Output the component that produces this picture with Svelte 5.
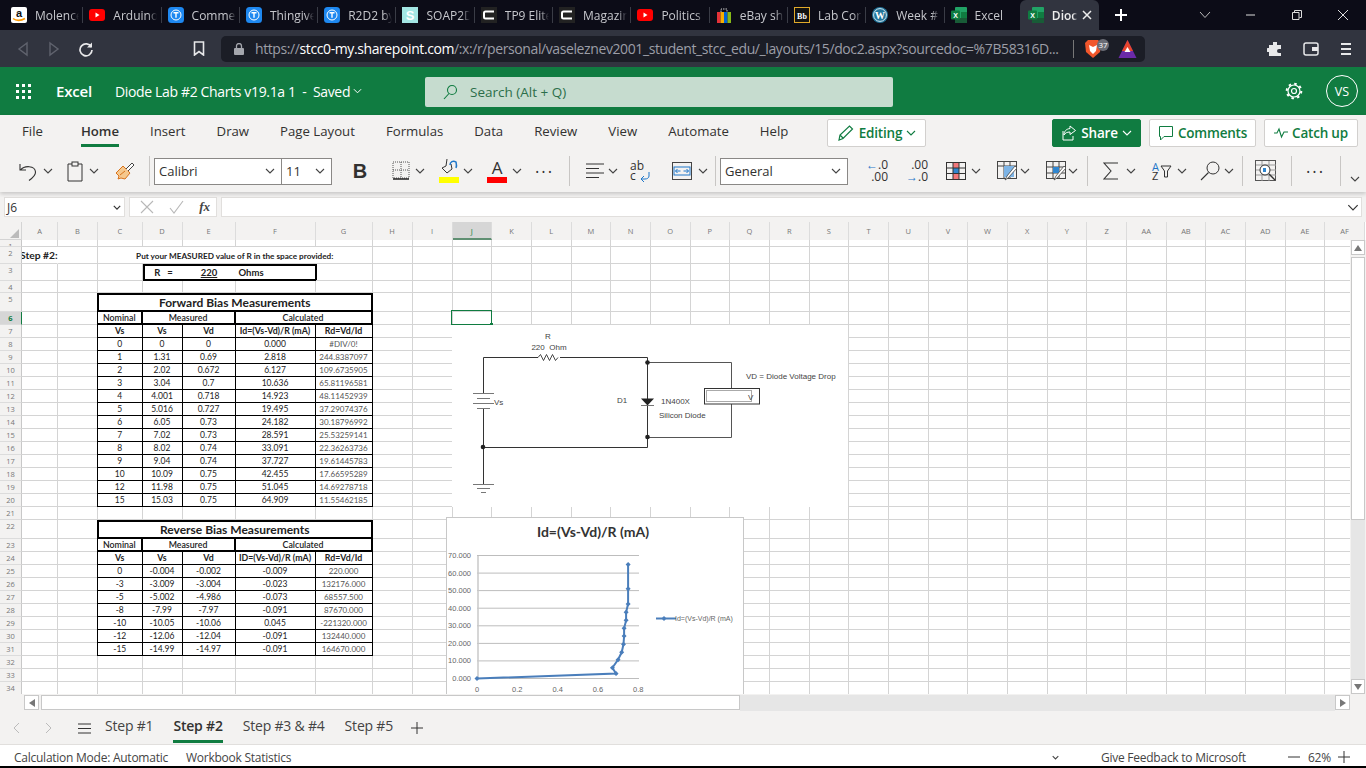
<script>
  const tabs = [
    ['Molence','amazon'],['Arduino','yt'],['Comme','t'],['Thingive','t'],['R2D2 by','t'],['SOAP2D','s'],['TP9 Elite','c'],['Magazin','c'],['Politics','yt'],['eBay sh','ebay'],['Lab Cor','bb'],['Week #','wp'],['Excel','xl']
  ];
  const ribbon = ['File','Home','Insert','Draw','Page Layout','Formulas','Data','Review','View','Automate','Help'];
  const colW = [36,40,44.5,40,53,80,57,40,40];
  for (let i = 0; i < 23; i++) colW.push(39.68);
  const names = 'A B C D E F G H I J K L M N O P Q R S T U V W X Y Z AA AB AC AD AE AF'.split(' ');
  const rowH = [7,17,17,12,19,13];
  for (let i = 0; i < 14; i++) rowH.push(13);
  rowH.push(13,19,13);
  for (let i = 0; i < 11; i++) rowH.push(13);
  const gridCols = '22px ' + colW.map(w => w + 'px').join(' ');
  const gridRows = '18px ' + rowH.map(h => h + 'px').join(' ');

  const fwd = [
    ['0','0','0','0.000','#DIV/0!'],['1','1.31','0.69','2.818','244.8387097'],['2','2.02','0.672','6.127','109.6735905'],
    ['3','3.04','0.7','10.636','65.81196581'],['4','4.001','0.718','14.923','48.11452939'],['5','5.016','0.727','19.495','37.29074376'],
    ['6','6.05','0.73','24.182','30.18796992'],['7','7.02','0.73','28.591','25.53259141'],['8','8.02','0.74','33.091','22.36263736'],
    ['9','9.04','0.74','37.727','19.61445783'],['10','10.09','0.75','42.455','17.66595289'],['12','11.98','0.75','51.045','14.69278718'],['15','15.03','0.75','64.909','11.55462185']
  ];
  const rev = [
    ['0','-0.004','-0.002','-0.009','220.000'],['-3','-3.009','-3.004','-0.023','132176.000'],['-5','-5.002','-4.986','-0.073','68557.500'],
    ['-8','-7.99','-7.97','-0.091','87670.000'],['-10','-10.05','-10.06','0.045','-221320.000'],['-12','-12.06','-12.04','-0.091','132440.000'],['-15','-14.99','-14.97','-0.091','164670.000']
  ];
  const data = {};
  const put = (r, c, t, cls = '', span = 1) => { data[r + '-' + c] = { t, cls, span }; for (let i = 1; i < span; i++) data[r + '-' + (c + i)] = null; };
  put(2, 0, 'Step #2:', 'stepl');
  put(2, 2, 'Put your MEASURED value of R in the space provided:', 'note', 5);
  put(3, 3, 'R   =', 'rb rl');
  put(3, 4, '220', 'rb rm');
  put(3, 5, 'Ohms', 'rb rr');
  const block = (top, title, head, rows) => {
    put(top, 2, title, 'title', 5);
    put(top + 1, 2, 'Nominal', 'sub first');
    put(top + 1, 3, 'Measured', 'sub', 2);
    put(top + 1, 5, 'Calculated', 'sub', 2);
    head.forEach((h, i) => put(top + 2, 2 + i, h, 'td hd' + (i === 0 ? ' first' : '')));
    rows.forEach((row, j) => row.forEach((v, i) => put(top + 3 + j, 2 + i, v, 'td' + (i === 0 ? ' first' : '') + (i === 4 ? ' grey' : ''))));
  };
  block(5, 'Forward Bias Measurements', ['Vs','Vs','Vd','Id=(Vs-Vd)/R (mA)','Rd=Vd/Id'], fwd);
  block(22, 'Reverse Bias Measurements', ['Vs','Vs','Vd','ID=(Vs-Vd)/R (mA)','Rd=Vd/Id'], rev);

  const cx = v => 477 + v * 201.5;
  const cy = v => 678.5 - v * 1.757;
  const pts = fwd.map(r => [cx(+r[2]), cy(+r[3])]);
  const line = pts.map(p => p[0].toFixed(1) + ',' + p[1].toFixed(1)).join(' ');
  const ticks = [0,10,20,30,40,50,60,70];
  const xt = ['0','0.2','0.4','0.6','0.8'];
</script>

{#snippet chev(w = 10)}
  <svg class="chev" width={w} height="6" viewBox="0 0 10 6"><path d="M1 1l4 4 4-4" fill="none" stroke="#444" stroke-width="1.1"/></svg>
{/snippet}

{#snippet chevG()}
  <svg width="10" height="6" viewBox="0 0 10 6"><path d="M1 1l4 4 4-4" fill="none" stroke="#107c41" stroke-width="1.1"/></svg>
{/snippet}

{#snippet fav(k)}
  <svg width="16" height="16" viewBox="0 0 16 16" class="fav">
    {#if k === 'amazon'}
      <rect width="16" height="16" rx="2" fill="#fff"/><text x="8" y="10" text-anchor="middle" class="fa">a</text><path d="M2 11.5c3 2.5 8 2.5 12 0" stroke="#f90" stroke-width="1.6" fill="none"/>
    {:else if k === 'yt'}
      <rect y="2" width="16" height="12" rx="3" fill="#f00"/><path d="M6.5 5.5v5l4-2.5z" fill="#fff"/>
    {:else if k === 't'}
      <rect width="16" height="16" rx="3.5" fill="#1e88f0"/><circle cx="8" cy="8" r="5" fill="none" stroke="#fff" stroke-width="1"/><path d="M5.5 5.8h5M8 5.8v5" stroke="#fff" stroke-width="1.4" fill="none"/>
    {:else if k === 's'}
      <rect width="16" height="16" fill="#a3e6e3"/><text x="8" y="13" text-anchor="middle" class="fs">S</text>
    {:else if k === 'c'}
      <rect width="16" height="16" fill="#222"/><path d="M13 4.5H4.5Q3 4.5 3 6v4q0 1.5 1.5 1.5H13" fill="none" stroke="#fff" stroke-width="2"/>
    {:else if k === 'ebay'}
      <rect x="1" y="5" width="3.5" height="11" fill="#e53238"/><rect x="4.5" y="5" width="3.5" height="11" fill="#f5af02"/><rect x="8" y="5" width="3.5" height="11" fill="#0064d2"/><rect x="11.5" y="5" width="3.5" height="11" fill="#86b817"/><path d="M5 5V2h6v3" stroke="#ccc" fill="none" stroke-dasharray="1.5 1"/>
    {:else if k === 'bb'}
      <rect x=".5" y=".5" width="15" height="15" fill="#111" stroke="#e0a92a"/><text x="8" y="11.5" text-anchor="middle" class="fb">Bb</text>
    {:else if k === 'wp'}
      <circle cx="8" cy="8" r="8" fill="#21759b"/><circle cx="8" cy="8" r="6.4" fill="none" stroke="#fff" stroke-width=".8"/><text x="8" y="12" text-anchor="middle" class="fw">W</text>
    {:else if k === 'xl'}
      <rect x="4" width="12" height="16" rx="1" fill="#21a366"/><rect x="10" y="5" width="6" height="6" fill="#107c41"/><rect x="4" y="11" width="12" height="5" fill="#185c37"/><rect y="3.5" width="9" height="9" rx="1" fill="#107c41"/><text x="4.5" y="11" text-anchor="middle" class="fx">X</text>
    {/if}
  </svg>
{/snippet}

<div class="app">
  <div class="tabbar">
    {#each tabs as [t, k]}
      <div class="tab">{@render fav(k)}<span class="tt">{t}</span></div>
    {/each}
    <div class="tab active">{@render fav('xl')}<span class="tt">Dioc</span>
      <svg class="tabx" width="10" height="10" viewBox="0 0 10 10"><path d="M1 1l8 8M9 1L1 9" stroke="#eee" stroke-width="1.5"/></svg>
    </div>
    <svg class="plus" width="14" height="14" viewBox="0 0 14 14"><path d="M7 1v12M1 7h12" stroke="#fff" stroke-width="2"/></svg>
    <div class="winbtns">
      <svg width="12" height="8" viewBox="0 0 12 8"><path d="M1 1l5 5.5L11 1" stroke="#bbb" fill="none"/></svg>
      <svg width="12" height="12" viewBox="0 0 12 12"><path d="M1 6h9" stroke="#ddd"/></svg>
      <svg width="12" height="12" viewBox="0 0 12 12"><path d="M1.5 3.5h6.5v7h-6.5zM3.5 3V1.5h7v7H8.5" stroke="#ddd" fill="none"/></svg>
      <svg width="12" height="12" viewBox="0 0 12 12"><path d="M1 1l10 10M11 1L1 11" stroke="#ddd"/></svg>
    </div>
  </div>

  <div class="navbar">
    <svg class="nv1" width="12" height="16" viewBox="0 0 12 16"><path d="M10 2L2 8l8 6z" fill="none" stroke="#60636e" stroke-width="1.4"/></svg>
    <svg class="nv2" width="12" height="16" viewBox="0 0 12 16"><path d="M2 2l8 6-8 6z" fill="none" stroke="#60636e" stroke-width="1.4"/></svg>
    <svg class="nv3" width="16" height="16" viewBox="0 0 16 16"><path d="M13.3 6A6 6 0 1 0 14 9" fill="none" stroke="#e8e8ea" stroke-width="1.7"/><path d="M14 1.5V6.6H9z" fill="#e8e8ea"/></svg>
    <svg class="nv4" width="12" height="15" viewBox="0 0 12 15"><path d="M1.5 1h9v13L6 10.5 1.5 14z" fill="none" stroke="#e8e8ea" stroke-width="1.6"/></svg>
    <div class="urlbox">
      <svg width="10" height="12" viewBox="0 0 10 12"><rect y="5" width="10" height="7" rx="1" fill="#a4a6ad"/><path d="M2.5 5V3a2.5 2.5 0 0 1 5 0v2" fill="none" stroke="#a4a6ad" stroke-width="1.3"/></svg>
      <span class="url">https://<b>stcc0-my.sharepoint.com</b>/:x:/r/personal/vaseleznev2001_student_stcc_edu/_layouts/15/doc2.aspx?sourcedoc=%7B58316D...</span>
      <i class="usep"></i>
      <svg class="brave" width="18" height="20" viewBox="0 0 18 20"><path d="M4 1h10l3 3-1 9-7 6-7-6-1-9z" fill="#f1562b"/><path d="M5 6l4 2 4-2-1 6-3 3-3-3z" fill="#fff"/></svg>
      <span class="badge">37</span>
      <svg class="tri" width="19" height="20" viewBox="0 0 19 20"><path d="M9.5 1L18.5 19H.5z" fill="#6b2aa8"/><path d="M9.5 1L15 12H4z" fill="#e8452c"/><path d="M9.5 8l3 5h-6z" fill="#fff"/></svg>
    </div>
    <svg class="ex1" width="16" height="16" viewBox="0 0 16 16"><path d="M6 1h4v3h4v4h-2a2 2 0 0 0 0 4h2v3H2v-4H1a2 2 0 0 1 0-4h1V4h4z" fill="#e8e8ea"/></svg>
    <svg class="ex2" width="16" height="15" viewBox="0 0 16 15"><rect x="1" y="2" width="14" height="12" rx="2" fill="none" stroke="#e8e8ea" stroke-width="1.5"/><rect x="9" y="6" width="6" height="4" fill="#e8e8ea"/></svg>
    <svg class="ex3" width="12" height="14" viewBox="0 0 12 14"><path d="M1 2h10M1 7h10M1 12h10" stroke="#e8e8ea" stroke-width="1.8"/></svg>
  </div>

  <div class="greenbar">
    <svg class="waffle" width="16" height="16" viewBox="0 0 16 16" fill="#fff">
      {#each [1,7,13] as y}{#each [1,7,13] as x}<rect x={x-1} {y} width="3" height="3"/>{/each}{/each}
    </svg>
    <span class="brand">Excel</span>
    <span class="doc">Diode Lab #2 Charts v19.1a 1&nbsp; - &nbsp;Saved</span>
    <svg class="dchev" width="9" height="6" viewBox="0 0 10 6"><path d="M1 1l4 4 4-4" fill="none" stroke="#fff" stroke-width="1.1"/></svg>
    <div class="search">
      <svg width="16" height="16" viewBox="0 0 16 16"><circle cx="10" cy="6" r="4.5" fill="none" stroke="#107c41" stroke-width="1.1"/><path d="M7 9.5L2 15" stroke="#107c41" stroke-width="1.1"/></svg>
      <span>Search (Alt + Q)</span>
    </div>
    <svg class="gear" width="18" height="18" viewBox="0 0 18 18"><circle cx="9" cy="9" r="2.5" fill="none" stroke="#fff" stroke-width="1.2"/><circle cx="9" cy="9" r="6" fill="none" stroke="#fff" stroke-width="1.2"/><circle cx="9" cy="9" r="7.3" fill="none" stroke="#fff" stroke-width="2" stroke-dasharray="2.5 3.23"/></svg>
    <div class="avatar">VS</div>
  </div>

  <div class="ribbon">
    <div class="rtabs">
      {#each ribbon as r}
        <span class="rtab" class:on={r === 'Home'}>{r}</span>
      {/each}
      <div class="rbtn editing">
        <svg width="18" height="18" viewBox="0 0 18 18"><path d="M2 16l1-5L12.5 2l3 3L6 14.5zM3 11l3.5 3.5" fill="none" stroke="#107c41" stroke-width="1.2"/></svg>
        <b>Editing</b>{@render chevG()}
      </div>
      <div class="rbtn share">
        <svg width="16" height="16" viewBox="0 0 16 16"><path d="M9 1l5.5 4.5L9 9.5V7c-3 0-5 1-6 3 0-3.5 2-6 6-6.500zM2 6v9h10v-4" fill="none" stroke="#fff" stroke-width="1"/></svg>
        <b>Share</b>
        <svg width="10" height="6" viewBox="0 0 10 6"><path d="M1 1l4 4 4-4" fill="none" stroke="#fff" stroke-width="1.1"/></svg>
      </div>
      <div class="rbtn comments">
        <svg width="16" height="16" viewBox="0 0 16 16"><path d="M1.5 1.5h13v10H6l-3.5 3.500v-3.500h-1z" fill="none" stroke="#107c41" stroke-width="1"/></svg>
        <b>Comments</b>
      </div>
      <div class="rbtn catch">
        <svg width="14" height="12" viewBox="0 0 14 12"><path d="M0 6h3l2-4 2.5 8L10 5h4" fill="none" stroke="#107c41" stroke-width="1.1"/></svg>
        <b>Catch up</b>
      </div>
    </div>
    <div class="tools">
      <div class="t w40"><svg width="20" height="22" viewBox="0 0 20 22"><path d="M2 4v6h6M2.5 10C6 5.5 17 5 17.5 12c.2 3-3 6-6.500 8.500" fill="none" stroke="#333" stroke-width="1.1"/></svg>{@render chev()}</div>
      <div class="t w40 g9 gp6"><svg width="16" height="21" viewBox="0 0 16 21"><path d="M5 3H1v17h14V3h-4" fill="none" stroke="#333"/><rect x="5" y="1" width="6" height="4" fill="#f3f2f1" stroke="#333"/></svg>{@render chev()}</div>
      <div class="t w24 g8"><svg width="20" height="20" viewBox="0 0 20 20"><path d="M1 12l7-7 7 7-5 6-4-1-3 1 1-3z" fill="#f6c88d" stroke="#d8731c"/><path d="M11 8l6-6 2 2-6 6" fill="#fff" stroke="#444"/><path d="M5 14l5-4" stroke="#d8731c"/></svg></div>
      <i class="sep g10"></i>
      <div class="select fontsel g4"><span>Calibri</span>{@render chev()}</div>
      <div class="select sizesel"><span>11</span>{@render chev()}</div>
      <div class="t w28 g14 bold">B</div>
      <div class="t w40 g18"><svg width="18" height="20" viewBox="0 0 18 20"><path d="M1 1h16v16H1zM9 1v16M1 9h16" fill="none" stroke="#555" stroke-dasharray="1 1"/><path d="M1 18h16" stroke="#111" stroke-width="1.4"/></svg>{@render chev()}</div>
      <div class="t w40 g7 gp4"><div class="ci"><svg width="18" height="16" viewBox="0 0 18 16"><path d="M7 1l-1 7-4 2 5 5 5-4-1-5" fill="none" stroke="#333"/><path d="M10 7c0-3 3-5 6-3 0 0 1 4 0 6" fill="none" stroke="#1f77c9" stroke-width="1.5"/></svg><i class="yb"></i></div>{@render chev()}</div>
      <div class="t w40 g8"><div class="ci"><span class="aa">A</span><i class="rb2"></i></div>{@render chev()}</div>
      <div class="t w26 g5 dots">•••</div>
      <i class="sep g11"></i>
      <div class="t w38 g15 gp3"><svg width="20" height="20" viewBox="0 0 20 20"><path d="M1 3h18M1 7.5h13M1 12h18M1 16.5h13" stroke="#333"/></svg>{@render chev()}</div>
      <div class="t w22 g7 wrap"><span class="abc">ab<br/>c</span><svg width="10" height="10" viewBox="0 0 10 10"><path d="M8 0v4c0 2-2 3-4 3H0m3-3L0 7l3 3" fill="none" stroke="#1f77c9"/></svg></div>
      <div class="t w42 g20 gp6"><svg width="20" height="18" viewBox="0 0 20 18"><rect x=".5" y=".5" width="19" height="17" fill="none" stroke="#444"/><rect x="2" y="5" width="16" height="8" fill="none" stroke="#1f77c9"/><path d="M3.5 9h5M5.5 7l-2 2 2 2M16.500 9h-5M14.500 7l2 2-2 2" stroke="#1f77c9" fill="none"/></svg>{@render chev()}</div>
      <i class="sep g1"></i>
      <div class="select gensel g4"><span>General</span>{@render chev()}</div>
      <div class="t w24 g17 dec"><span><em>←</em>.0<br/>.00</span></div>
      <div class="t w24 g16 dec"><span>.00<br/><em>→</em>.0</span></div>
      <div class="t w40 g17"><svg width="20" height="18" viewBox="0 0 20 18"><rect x=".5" y=".5" width="19" height="17" fill="none" stroke="#333"/><rect x="7" y="1" width="6" height="5" fill="#f2787b"/><rect x="7" y="11" width="6" height="6" fill="#f2787b"/><rect x="7" y="6" width="6" height="5" fill="#2f86d0"/><path d="M7 1v16M13 1v16M1 6h18M1 11.5h18" stroke="#333"/></svg>{@render chev()}</div>
      <div class="t w40 g11 gp3"><svg width="20" height="20" viewBox="0 0 20 20"><rect x=".5" y=".5" width="19" height="17" fill="none" stroke="#444"/><path d="M1 5h18M7 1v17M13 1v17" stroke="#444"/><rect x="7" y="5" width="10" height="11" fill="#7db4e6"/><path d="M18 5l-8 10-2 4 3-2 9-10z" fill="#fff" stroke="#444" stroke-width=".8"/></svg>{@render chev()}</div>
      <div class="t w40 g9 gp2"><svg width="20" height="20" viewBox="0 0 20 20"><rect x=".5" y=".5" width="19" height="17" fill="none" stroke="#444"/><path d="M1 6h18M1 12h18M7 1v17M13 1v17" stroke="#444"/><rect x="7" y="6" width="6" height="6" fill="#2f86d0"/><path d="M18 5l-8 10-2 4 3-2 9-10z" fill="#fff" stroke="#444" stroke-width=".8"/></svg>{@render chev()}</div>
      <i class="sep g1"></i>
      <div class="t w40 g15 gp7"><svg width="16" height="18" viewBox="0 0 16 18"><path d="M15 1H1l7 8-7 8h14" fill="none" stroke="#333" stroke-width="1.1"/></svg>{@render chev()}</div>
      <div class="t w40 g9"><div class="sort"><span>A</span><span>Z</span></div><svg width="12" height="14" viewBox="0 0 12 14"><path d="M1 2h10L7.5 7v6h-3V7z" fill="none" stroke="#333"/></svg>{@render chev()}</div>
      <div class="t w40 g8 gp4"><svg width="20" height="20" viewBox="0 0 20 20"><circle cx="13" cy="7" r="6" fill="none" stroke="#333"/><path d="M8.500 11.500L1 19" stroke="#333" stroke-width="1.1"/></svg>{@render chev()}</div>
      <i class="sep g2"></i>
      <div class="t w24 g12"><svg width="22" height="22" viewBox="0 0 22 22"><rect x=".5" y=".5" width="20" height="20" fill="none" stroke="#555"/><path d="M1 5h20M1 10h20M1 15h20M7 1v20M14 1v20" stroke="#999"/><circle cx="10" cy="10" r="5" fill="#fff" stroke="#333"/><rect x="8" y="8" width="3" height="4" fill="#2f86d0"/><path d="M14 14l6 6" stroke="#333" stroke-width="1.3"/></svg></div>
      <i class="sep g12"></i>
      <div class="t w26 g11 dots">•••</div>
      <i class="sep g11"></i>
      <div class="collapse">{@render chev()}</div>
    </div>
  </div>

  <div class="fbar">
    <div class="fbox name"><span>J6</span><svg width="8" height="5" viewBox="0 0 10 6"><path d="M1 1l4 4 4-4" fill="none" stroke="#333" stroke-width="1.5"/></svg></div>
    <div class="fbox acts">
      <svg width="14" height="14" viewBox="0 0 14 14"><path d="M1 1l12 12M13 1L1 13" stroke="#b8b8b8" stroke-width="1.1"/></svg>
      <svg width="15" height="14" viewBox="0 0 15 14"><path d="M1 8l4 5L14 1" fill="none" stroke="#b8b8b8" stroke-width="1.1"/></svg>
      <span class="fxl">fx</span>
    </div>
    <div class="fbox input"><svg width="12" height="7" viewBox="0 0 10 6"><path d="M1 1l4 4 4-4" fill="none" stroke="#333" stroke-width="1"/></svg></div>
  </div>

  <div class="sheet">
    <div class="grid" style:grid-template-columns={gridCols} style:grid-template-rows={gridRows}>
      <div class="corner"><i></i></div>
      {#each names as n}
        <div class="ch" class:sel={n === 'J'}>{n}</div>
      {/each}
      {#each rowH as _, ri}
        {@const r = ri + 1}
        <div class="rh" class:sel={r === 6}>{r}</div>
        {#each names as _n, c}
          {@const d = data[r + '-' + c]}
          {#if d !== null}
            <div class={'cell ' + (d ? d.cls : '')} style:grid-column={d && d.span > 1 ? 'span ' + d.span : undefined}>{#if d}{#if d.cls.includes('rm')}<u>{d.t}</u>{:else}{d.t}{/if}{/if}</div>
          {/if}
        {/each}
      {/each}
    </div>

    <div class="selbox"><i></i></div>

    <svg class="circuit" width="396" height="182" viewBox="452 325 396 182">
      <g fill="none" stroke="#333" stroke-width="1">
        <path d="M483.5 393V357.5H538M560 357.5H647.5V447.5H483.5M483.5 408V484"/>
        <path d="M538 357.5l2.5-3 3 6 3-6 3 6 3-6 3 6 2.5-3" stroke-width=".9"/>
        <path d="M647.5 362.5H731.5V389M731.5 404V437.5H647.5" stroke="#555"/>
        <path d="M473 393.5h21M477 398.5h13M473 403.5h21M477 408.5h13" stroke="#777"/>
        <path d="M473 484.5h21M477 488.5h13M481 492.5h5" stroke="#777"/>
        <path d="M641 405.5h13" stroke="#777"/>
        <rect x="704.5" y="388.5" width="55" height="15.5" stroke="#333"/>
        <rect x="706.5" y="390.5" width="45" height="11" stroke="#aaa"/>
      </g>
      <path d="M641 398.5h13l-6.5 7z" fill="#222"/>
      <g fill="#222"><circle cx="647.5" cy="362.5" r="2.3"/><circle cx="647.5" cy="437" r="2.3"/><circle cx="483" cy="447" r="2.3"/></g>
      <g class="ct">
        <text x="548" y="339" text-anchor="middle">R</text>
        <text x="549" y="350" text-anchor="middle">220  Ohm</text>
        <text x="494" y="405">Vs</text>
        <text x="617" y="403">D1</text>
        <text x="661" y="404">1N400X</text>
        <text x="659" y="418">Silicon Diode</text>
        <text x="746" y="379">VD = Diode Voltage Drop</text>
        <text x="748" y="400">V</text>
      </g>
    </svg>

    <svg class="chart" width="298" height="177" viewBox="446 517 298 177">
      <rect x="446.5" y="517.5" width="297" height="177" fill="#fff" stroke="#c8c8c8"/>
      <text x="593" y="537" text-anchor="middle" class="ctitle">Id=(Vs-Vd)/R (mA)</text>
      {#each ticks as t}
        <path d={`M477 ${cy(t).toFixed(1)}H639`} stroke="#bdbdbd" fill="none"/>
        <text x="471" y={cy(t) + 2.5} text-anchor="end" class="cl">{t.toFixed(3)}</text>
      {/each}
      <path d="M478 556V679" stroke="#c8c8c8" fill="none" stroke-width="1.5"/>
      {#each xt as t}
        <text x={cx(+t)} y="692" text-anchor="middle" class="cl">{t}</text>
      {/each}
      <polyline points={line} fill="none" stroke="#4a7ebb" stroke-width="2"/>
      {#each pts as p}
        <path d={`M${p[0]} ${p[1]-2.5}l2.5 2.5-2.5 2.5-2.5-2.5z`} fill="#4a7ebb"/>
      {/each}
      <path d="M656 618.5H676" stroke="#4a7ebb" stroke-width="2" fill="none"/>
      <path d="M664 616l2.5 2.5-2.5 2.5-2.5-2.5z" fill="#4a7ebb"/>
      <text x="675" y="620.5" class="cleg">Id=(Vs-Vd)/R (mA)</text>
    </svg>

    <div class="vscroll">
      <div class="sbtn"><i class="up"></i></div>
      <div class="thumb"></div>
      <div class="track"></div>
      <div class="sbtn"><i class="down"></i></div>
    </div>
  </div>

  <div class="hscroll">
    <div class="sbtn h"><i class="left"></i></div>
    <div class="hthumb"></div>
    <div class="htrack"></div>
    <div class="sbtn h"><i class="right"></i></div>
  </div>

  <div class="sheettabs">
    <svg class="a1" width="8" height="12" viewBox="0 0 8 12"><path d="M7 1L2 6l5 5" fill="none" stroke="#bbb"/></svg>
    <svg class="a2" width="8" height="12" viewBox="0 0 8 12"><path d="M1 1l5 5-5 5" fill="none" stroke="#bbb"/></svg>
    <svg class="a3" width="13" height="11" viewBox="0 0 13 11"><path d="M0 1h13M0 5.5h13M0 10h13" stroke="#333"/></svg>
    <span class="st s1">Step #1</span>
    <span class="st on">Step #2</span>
    <span class="st">Step #3 &amp; #4</span>
    <span class="st">Step #5</span>
    <svg class="a4" width="12" height="12" viewBox="0 0 12 12"><path d="M6 0v12M0 6h12" stroke="#333"/></svg>
  </div>

  <div class="status">
    <span>Calculation Mode: Automatic</span>
    <span class="wb">Workbook Statistics</span>
    <svg class="sc" width="7" height="5" viewBox="0 0 10 6"><path d="M1 1l4 4 4-4" fill="none" stroke="#444" stroke-width="1.5"/></svg>
    <span class="fb2">Give Feedback to Microsoft</span>
    <svg class="zm" width="12" height="2" viewBox="0 0 12 2"><path d="M0 1h12" stroke="#333"/></svg>
    <span class="pc">62%</span>
    <svg class="zp" width="12" height="12" viewBox="0 0 12 12"><path d="M6 0v12M0 6h12" stroke="#333"/></svg>
  </div>
</div>

<style>
  :global(body) { margin: 0; background: #000; }
  .app { width: 1366px; height: 768px; overflow: hidden; display: flex; flex-direction: column; font-family: "Open Sans", sans-serif; background: #000; position: relative; }
  svg { display: block; flex: none; }

  .tabbar { height: 30px; background: #0c0c17; display: flex; align-items: center; padding-left: 5px; color: #c6c7cc; font-size: 12px; flex: none; }
  .tab { width: 78.3px; height: 30px; box-sizing: border-box; display: flex; align-items: center; gap: 8px; padding-left: 6px; position: relative; flex: none; }
  .tab::after { content: ""; position: absolute; right: 0; top: 7px; bottom: 7px; width: 1px; background: #3a3c46; }
  .tt { width: 44px; overflow: hidden; white-space: nowrap; mask-image: linear-gradient(90deg, #000 80%, transparent); }
  .active { background: #31343f; border-radius: 6px 6px 0 0; color: #eee; margin-left: -3px; width: 79px; padding-left: 8px; }
  .active::after { display: none; }
  .active .tt { width: 26px; font-weight: 600; margin-right: 4px; }
  .active .tabx { margin-left: -8px; }
  .plus { margin-left: 15px; }
  .winbtns { margin-left: auto; display: flex; align-items: center; width: 150px; justify-content: space-between; padding-right: 17px; }
  .fa { font: 700 11px "Liberation Sans"; fill: #111; }
  .fs { font: 700 13px "Liberation Sans"; fill: #fff; }
  .fb { font: 700 8px "Liberation Serif"; fill: #fff; }
  .fw { font: 700 10px "Liberation Serif"; fill: #fff; }
  .fx { font: 700 7px "Liberation Sans"; fill: #fff; }

  .navbar { height: 37px; background: #31343f; display: flex; align-items: center; flex: none; }
  .nv1 { margin-left: 17px; }
  .nv2 { margin-left: 19px; }
  .nv3 { margin-left: 18px; }
  .nv4 { margin-left: 99px; }
  .urlbox { margin-left: 16px; width: 924px; height: 26px; box-sizing: border-box; background: #1b1d26; border-radius: 5px; display: flex; align-items: center; padding-left: 13px; position: relative; color: #9c9ea7; }
  .url { margin-left: 11px; font-size: 14px; letter-spacing: -.4px; white-space: nowrap; width: 814px; flex: none; overflow: hidden; }
  .url b { color: #fff; font-weight: 400; }
  .usep { width: 1px; height: 18px; background: #777; margin-left: 4px; flex: none; }
  .brave { margin-left: 10px; }
  .badge { position: absolute; left: 876px; top: 3px; background: #6b6d76; color: #fff; font-size: 8px; width: 12px; height: 12px; border-radius: 6px; text-align: center; line-height: 12px; }
  .tri { margin-left: 16px; }
  .ex1 { margin-left: 122px; }
  .ex2 { margin-left: 20px; }
  .ex3 { margin-left: 21px; }

  .greenbar { height: 48px; background: #107c41; display: flex; align-items: center; color: #fff; flex: none; }
  .waffle { margin-left: 16px; }
  .brand { margin-left: 24px; font-size: 15px; font-weight: 600; width: 59px; letter-spacing: -.2px; }
  .doc { font-size: 14px; letter-spacing: -.35px; white-space: nowrap; }
  .dchev { margin-left: 3px; }
  .search { position: absolute; left: 425px; top: 77px; width: 468px; height: 30px; background: #c6dccf; border-radius: 2px; display: flex; align-items: center; gap: 12px; padding-left: 17px; box-sizing: border-box; color: #2c6e4a; font-size: 13.5px; }
  .gear { margin-left: auto; }
  .avatar { margin: 0 8px 0 23px; width: 30px; height: 30px; border: 1px solid #fff; border-radius: 50%; display: flex; align-items: center; justify-content: center; font-size: 12.5px; }

  .ribbon { height: 77px; background: #f3f2f1; flex: none; box-shadow: 0 2px 4px rgba(0,0,0,.18); position: relative; z-index: 3; color: #323130; }
  .rtabs { height: 41px; display: flex; align-items: flex-start; padding-left: 22px; position: relative; }
  .rtab { font-size: 13.2px; line-height: 18px; margin-top: 7px; margin-right: 31px; padding-bottom: 4px; border-bottom: 3px solid transparent; white-space: nowrap; }
  .rtab:first-child { margin-right: 38px; }
  .rtab.on { font-weight: 600; border-bottom-color: #107c41; }
  .rbtn { position: absolute; top: 4px; height: 28px; box-sizing: border-box; background: #fff; border: 1px solid #d2d0ce; display: flex; align-items: center; justify-content: center; gap: 4px; font-size: 13.5px; border-radius: 2px; color: #107c41; }
  .rbtn b { font-weight: 600; letter-spacing: -.2px; }
  .editing { left: 827px; width: 99px; }
  .share { left: 1052px; width: 89px; background: #107c41; border-color: #107c41; color: #fff; }
  .comments { left: 1149px; width: 107px; }
  .catch { left: 1264px; width: 94px; }

  .tools { display: flex; align-items: center; height: 30px; padding-left: 18px; position: relative; }
  .t { display: flex; align-items: center; justify-content: flex-start; gap: 5px; flex: none; height: 30px; }
  .gp2 { gap: 2px; } .gp3 { gap: 3px; } .gp4 { gap: 4px; } .gp6 { gap: 6px; } .gp7 { gap: 7px; }
  .w22 { width: 22px; } .w24 { width: 24px; } .w26 { width: 26px; justify-content: center; } .w28 { width: 28px; justify-content: center; } .w38 { width: 38px; } .w40 { width: 40px; } .w42 { width: 42px; }
  .g1 { margin-left: 1px; } .g2 { margin-left: 2px; } .g4 { margin-left: 4px; } .g5 { margin-left: 5px; } .g7 { margin-left: 7px; } .g8 { margin-left: 8px; } .g9 { margin-left: 9px; } .g10 { margin-left: 10px; } .g11 { margin-left: 11px; } .g12 { margin-left: 12px; } .g14 { margin-left: 14px; } .g15 { margin-left: 15px; } .g16 { margin-left: 16px; } .g17 { margin-left: 17px; } .g18 { margin-left: 18px; } .g20 { margin-left: 20px; }
  .sep { width: 1px; height: 30px; background: #c8c6c4; flex: none; }
  .select { height: 27px; box-sizing: border-box; background: #fff; border: 1px solid #8a8886; display: flex; align-items: center; justify-content: space-between; padding: 0 6px 0 4px; font-size: 13px; flex: none; }
  .fontsel { width: 128px; }
  .sizesel { width: 50px; border-left-width: 0; }
  .gensel { width: 128px; }
  .bold { font: 700 20px "Liberation Sans", sans-serif; color: #323130; }
  .ci { width: 20px; height: 26px; position: relative; display: flex; justify-content: center; flex: none; }
  .yb, .rb2 { position: absolute; left: 0; right: 0; bottom: 1px; height: 6px; background: #ff0; }
  .rb2 { background: #f00; }
  .aa { font-size: 17px; line-height: 20px; }
  .dots { font-size: 9px; letter-spacing: 3px; color: #333; }
  .abc { font-size: 12px; line-height: 10px; }
  .wrap { position: relative; }
  .wrap svg { position: absolute; right: 1px; bottom: 4px; }
  .dec { font-size: 12px; line-height: 12px; justify-content: center; text-align: right; }
  .dec em { color: #1f77c9; font-style: normal; }
  .sort { font: 11px/9px "Open Sans"; display: flex; flex-direction: column; margin-right: -4px; }
  .sort span:first-child { color: #1f77c9; }
  .collapse { position: absolute; left: 1350px; top: 20px; }

  .fbar { height: 30px; background: #f3f2f1; display: flex; align-items: center; padding-left: 4px; gap: 4px; flex: none; }
  .fbox { height: 20px; box-sizing: border-box; background: #fff; border: 1px solid #e1dfdd; display: flex; align-items: center; font-size: 12px; color: #333; }
  .name { width: 121px; justify-content: space-between; padding: 0 3px 0 2px; }
  .acts { width: 88px; padding: 0 6px 0 10px; justify-content: space-between; }
  .fxl { font: italic 700 13px "Liberation Serif", serif; color: #444; }
  .input { width: 1141px; justify-content: flex-end; padding-right: 2px; }

  .sheet { height: 472px; position: relative; overflow: hidden; background: #fff; flex: none; }
  .grid { display: grid; width: 1366px; height: 472px; font-family: Lato, sans-serif; color: #222; background: #fff; }
  .corner { background: #f3f2f1; position: relative; border-bottom: 1px solid #d4d4d4; border-right: 1px solid #d4d4d4; box-sizing: border-box; }
  .corner i { position: absolute; right: 2px; bottom: 1px; border-style: solid; border-width: 0 0 9px 9px; border-color: transparent transparent #bbb transparent; }
  .ch { background: #f3f2f1; box-sizing: border-box; border-right: 1px solid #dcdcdc; font: 7.5px/18px "Open Sans", sans-serif; color: #777; text-align: center; }
  .ch.sel { background: #d6d6d6; border-bottom: 2px solid #5f8f72; color: #107c41; }
  .rh { background: #f3f2f1; box-sizing: border-box; border-bottom: 1px solid #dcdcdc; border-right: 1px solid #c8c8c8; font: 7.5px/12px "Open Sans", sans-serif; color: #777; text-align: center; position: relative; z-index: 1; overflow: hidden; }
  .rh.sel { background: #d6d6d6; color: #107c41; font-weight: 700; border-right: 1px solid #107c41; }
  .cell { box-sizing: border-box; border-right: 1px solid #d4d4d4; border-bottom: 1px solid #d4d4d4; font-size: 8.5px; line-height: 12px; text-align: center; white-space: nowrap; min-width: 0; }
  .stepl { font-weight: 700; font-size: 10.3px; line-height: 17px; text-align: left; text-indent: -2px; border-right-color: transparent; overflow: visible; }
  .note { font-weight: 700; font-size: 8.2px; line-height: 18px; }
  .rb { border-top: 2px solid #000; border-bottom: 2px solid #000; font-weight: 700; line-height: 13px; border-right: 0; font-size: 9.5px; white-space: pre; }
  .rl { border-left: 2px solid #000; }
  .rm { font-weight: 700; }
  .rr { border-right: 2px solid #000; text-align: left; padding-left: 3px; width: 81px; }
  .title { border: 2px solid #000; font-weight: 700; font-size: 12px; line-height: 15px; position: relative; z-index: 1; margin-left: -1px; }
  .sub { border: 2px solid #000; border-top: 0; border-left: 0; font-size: 8.8px; line-height: 11px; font-weight: 600; }
  .td { border-right: 1px solid #000; border-bottom: 1px solid #000; }
  .hd { font-weight: 700; font-size: 8.8px; }
  .first { box-shadow: -1px 0 0 #000; }
  .grey { color: #555; font-size: 8px; }

  .selbox { position: absolute; left: 451px; top: 88px; width: 41px; height: 15px; box-sizing: border-box; border: 1px solid #107c41; }
  .selbox i { position: absolute; right: -2px; bottom: -2px; width: 3px; height: 3px; background: #107c41; }

  .circuit { position: absolute; left: 452px; top: 103px; background: #fff; }
  .ct text { font: 8px "Liberation Sans", sans-serif; fill: #444; white-space: pre; }
  .chart { position: absolute; left: 446px; top: 295px; }
  .ctitle { font: 700 14px Lato, sans-serif; fill: #333; }
  .cl { font: 7.5px "Liberation Sans", sans-serif; fill: #666; }
  .cleg { font: 7px "Liberation Sans", sans-serif; fill: #666; }

  .vscroll { position: absolute; left: 1350px; top: 18px; width: 16px; height: 454px; background: #f3f2f1; display: flex; flex-direction: column; box-sizing: border-box; padding: 0 1px; }
  .sbtn { height: 15px; width: 14px; flex: none; background: #fff; border: 1px solid #c8c8c8; box-sizing: border-box; display: flex; align-items: center; justify-content: center; }
  .thumb { height: 263px; background: #fff; border: 1px solid #c8c8c8; box-sizing: border-box; margin-top: 2px; flex: none; }
  .track { flex: 1; background: #e6e6e6; }
  .up, .down, .left, .right { width: 0; height: 0; border-style: solid; border-color: transparent; }
  .up { border-width: 0 4px 6px; border-bottom-color: #777; }
  .down { border-width: 6px 4px 0; border-top-color: #777; }
  .left { border-width: 4px 6px 4px 0; border-right-color: #777; }
  .right { border-width: 4px 0 4px 6px; border-left-color: #777; }

  .hscroll { height: 18px; background: #f3f2f1; display: flex; align-items: flex-start; padding-left: 24px; flex: none; padding-top: 1px; box-sizing: border-box; }
  .sbtn.h { height: 15px; width: 15px; }
  .hthumb { margin-left: 2px; width: 699px; height: 15px; background: #fff; border: 1px solid #c8c8c8; box-sizing: border-box; }
  .htrack { width: 595px; height: 16px; background: #e6e6e6; }

  .sheettabs { height: 33px; background: #f3f2f1; border-bottom: 1px solid #e1dfdd; box-sizing: border-box; display: flex; align-items: center; font-size: 14px; color: #444; flex: none; }
  .a1 { margin-left: 12px; }
  .a2 { margin-left: 25px; }
  .a3 { margin-left: 25px; }
  .a4 { margin-left: -2px; }
  .st { margin-right: 20px; padding: 2px 0 4px; border-bottom: 3px solid transparent; margin-top: 1px; line-height: 20px; letter-spacing: -.2px; white-space: nowrap; }
  .s1 { margin-left: 14px; }
  .st.on { font-weight: 600; border-bottom-color: #107c41; color: #323130; }

  .status { height: 21px; background: #fff; display: flex; align-items: center; padding: 3px 0 0 14px; box-sizing: border-box; font-size: 12px; color: #444; flex: none; letter-spacing: -.25px; }
  .wb { margin-left: 18px; }
  .sc { position: absolute; left: 1052px; }
  .fb2 { position: absolute; left: 1101px; }
  .zm { position: absolute; left: 1288px; }
  .pc { position: absolute; left: 1308px; }
  .zp { position: absolute; left: 1338px; }
</style>
